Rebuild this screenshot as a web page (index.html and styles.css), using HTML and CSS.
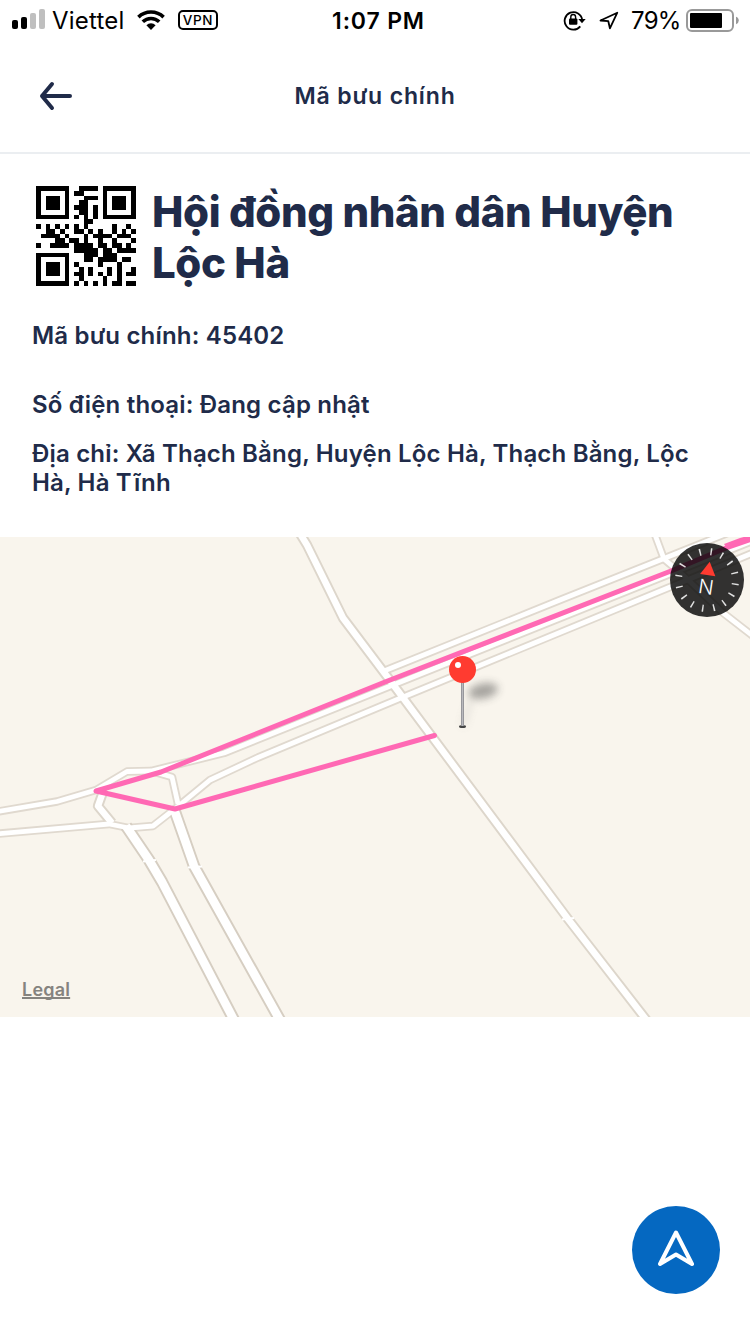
FILE: index.html
```html
<!DOCTYPE html>
<html lang="vi">
<head>
<meta charset="utf-8">
<title>Mã bưu chính</title>
<link rel="stylesheet" href="styles.css">
</head>
<body>
<div class="screen">
  <div class="status">
    <div class="status-side">
      <svg class="signal" width="34" height="22" viewBox="0 0 34 22"><rect x="0" y="12" width="6" height="9" rx="2"/><rect x="9" y="9" width="6" height="12" rx="2"/><g fill="#bfbfbf"><rect x="18" y="5" width="6" height="16" rx="2"/><rect x="27" y="1" width="6" height="20" rx="2"/></g></svg>
      <span class="carrier">Viettel</span>
      <svg class="wifi" width="28" height="20" viewBox="0 0 28 20"><g fill="none" stroke="#000" stroke-width="3.6"><path d="M1.4 7.1a18.3 18.3 0 0 1 25.2 0"/><path d="M5.8 11.8a11.8 11.8 0 0 1 16.4 0"/></g><path d="M9.4 15.2a6.7 6.7 0 0 1 9.2 0L14 20z"/></svg>
      <span class="vpn">VPN</span>
    </div>
    <span class="clock">1:07 PM</span>
    <div class="status-side status-right">
      <svg class="lock" width="24" height="22" viewBox="0 0 24 22"><path d="M17.300 17.400a8.800 8.800 0 1 1 1.900-6.400" fill="none" stroke="#000" stroke-width="1.8"/><path d="M15.300 10h7.400L19 14.300z"/><rect x="6" y="9.500" width="8.400" height="6.200" rx="1"/><path d="M7.800 10V7.900a2.400 2.400 0 0 1 4.800 0V10" fill="none" stroke="#000" stroke-width="1.4"/></svg>
      <svg class="locate" width="20" height="20" viewBox="0 0 20 20"><path d="M18.300 2.700 1.500 10.500 9.300 11.200 10.900 18.300z" fill="none" stroke="#000" stroke-width="1.8" stroke-linejoin="round"/></svg>
      <span class="percent">79%</span>
      <svg class="battery" width="54" height="24" viewBox="0 0 54 24"><rect x="1" y="1" width="46" height="21" rx="5" fill="#fff" stroke="#999" stroke-width="2"/><rect x="4" y="4" width="32" height="15" rx="1"/><path d="M50 7.700a4 4 0 0 1 0 7.600z" fill="#999"/></svg>
    </div>
  </div>
  <header class="nav">
    <svg class="back" width="34" height="30" viewBox="0 0 34 30"><path d="M13 3 3 15 13 27M3 15H31" fill="none" stroke="#202b49" stroke-width="4" stroke-linecap="round" stroke-linejoin="round"/></svg>
    <span class="nav-title">Mã bưu chính</span>
  </header>
  <main class="info">
    <div class="heading">
      <svg class="qr" id="qr" width="100" height="100" viewBox="0 0 21 21" shape-rendering="crispEdges"></svg>
      <h1 class="name">Hội đồng nhân dân Huyện<br>Lộc Hà</h1>
    </div>
    <p class="line code">Mã bưu chính: 45402</p>
    <p class="line phone">Số điện thoại: Đang cập nhật</p>
    <p class="line address">Địa chỉ: Xã Thạch Bằng, Huyện Lộc Hà, Thạch Bằng, Lộc<br>Hà, Hà Tĩnh</p>
  </main>
  <section class="map">
    <svg class="map-art" width="750" height="480" viewBox="0 537 750 480">
      <defs>
        <filter id="soft" x="-50%" y="-50%" width="200%" height="200%"><feGaussianBlur stdDeviation="4"/></filter>
        <linearGradient id="stem"><stop offset="0" stop-color="#85858a"/><stop offset=".5" stop-color="#b9b9bd"/><stop offset="1" stop-color="#85858a"/></linearGradient>
        <g id="minor" fill="none" stroke-linejoin="round">
          <path d="M-5 812 57 801.500 96 790 127 771.500 151 771 224 753 388 687 760 538"/>
          <path d="M-5 834 109 824 129 828 153 826 176 808 210 780 258 757.500 402 697.500 760 550"/>
          <path d="M384 671 560 600 664 558.500 760 520"/>
          <path d="M151 771 172 777 178 804"/>
          <path d="M654 532 664 559 683 575 722 612 758 640"/>
        </g>
        <g id="major" fill="none" stroke-linejoin="round">
          <path d="M299 532 307 545 343 618 395 687 568 919 648 1022"/>
          <path d="M103 792 98 806 112 823"/>
        </g>
        <g id="trunk" fill="none" stroke-linejoin="round">
          <path d="M126 826 149 860 162 882 235 1022"/>
          <path d="M174 809 194 866 281 1022"/>
        </g>
      </defs>
      <use href="#minor" stroke="#e0d9cf" stroke-width="8.400"/>
      <use href="#major" stroke="#ddd6cb" stroke-width="10.400"/>
      <use href="#trunk" stroke="#d6cec2" stroke-width="12.400"/>
      <use href="#minor" stroke="#fff" stroke-width="4.800"/>
      <use href="#major" stroke="#fff" stroke-width="6.500"/>
      <use href="#trunk" stroke="#fff" stroke-width="8.500"/>
      <path d="M143 861.500 156 860M188 867.500 202 866.500M562 919.500 574 918" stroke="#fff" stroke-width="2"/>
      <path d="M434.500 735.500 175 809 96 791 161 772 385 682 671 571 726 548 755 538" fill="none" stroke="#ff69b4" stroke-width="5" stroke-linecap="round" stroke-linejoin="round"/>
      <path d="M724 544 740 538 755 534V540L742 544 726 547Z" fill="#ff69b4"/>
      <g filter="url(#soft)" opacity=".42"><ellipse cx="483" cy="691" rx="15" ry="7.500" transform="rotate(-12 483 691)" fill="#333"/><path d="M463 726 471 699" stroke="#777" stroke-width="2"/></g>
      <ellipse cx="462.500" cy="726.500" rx="3.500" ry="1.500" fill="#444"/>
      <rect x="461" y="680" width="3" height="46" fill="url(#stem)"/>
      <circle cx="462.500" cy="669.500" r="13.500" fill="#ff3b30"/>
      <circle cx="458" cy="665" r="3" fill="#fff"/>
      <g transform="translate(707 580)">
        <circle r="37" fill="#000" fill-opacity=".8"/>
        <g transform="rotate(8.500)">
          <circle class="dial" r="28.500" pathLength="360"/>
          <path d="M0-18.500 7.700-5H-7.700Z" fill="#ff3b30"/>
          <text class="north" x="0" y="14" text-anchor="middle">N</text>
        </g>
      </g>
    </svg>
    <span class="legal">Legal</span>
  </section>
  <button class="go" aria-label="Chỉ đường"><svg width="40" height="40" viewBox="0 0 40 40"><path d="M20 2.500 36 34 20 24.500 4 34Z" fill="none" stroke="#fff" stroke-width="4" stroke-linejoin="round"/></svg></button>
</div>
<script src="app.js"></script>
</body>
</html>
```
FILE: styles.css
```css
* { box-sizing: border-box; }
body { margin: 0; background: #fff; color: #202b49; font-family: Inter, "Noto Sans", sans-serif; }
.screen { position: relative; width: 750px; height: 1334px; overflow: hidden; display: flex; flex-direction: column; }
.status { height: 40px; flex: none; display: grid; grid-template-columns: 1fr auto 1fr; align-items: center; color: #000; font-size: 24px; line-height: 38px; }
.status-side { display: flex; align-items: center; }
.status-right { justify-content: flex-end; padding-right: 10px; }
.signal { margin-left: 12px; margin-top: -2px; }
.carrier { margin-left: 6px; width: 73px; padding-top: 2px; letter-spacing: .2px; white-space: nowrap; }
.wifi { margin-left: 12px; }
.vpn { margin-left: 13px; width: 40px; height: 20px; border: 2px solid #000; border-radius: 5px; font-size: 13.5px; font-weight: 500; line-height: 17px; letter-spacing: .7px; text-align: center; }
.clock { font-weight: 600; font-size: 23px; letter-spacing: .85px; padding: 2px 0 0 7px; }
.locate { margin-left: 12px; }
.percent { margin-left: 12px; width: 49px; padding-top: 2px; white-space: nowrap; font-size: 24px; letter-spacing: -.7px; }
.battery { margin-left: 6px; margin-top: 2px; }
.nav { height: 114px; flex: none; border-bottom: 2px solid #ebeef1; display: grid; grid-template-columns: 96px 1fr 96px; align-items: center; }
.back { margin-left: 39px; }
.nav-title { text-align: center; font-size: 23px; font-weight: 600; letter-spacing: .85px; }
.info { height: 383px; flex: none; padding: 32px 32px 0; }
.heading { display: flex; height: 102px; padding-left: 4px; }
.name { margin: 0 0 0 16px; font-size: 42px; line-height: 51px; font-weight: 800; letter-spacing: -.4px; white-space: nowrap; }
.line { margin: 0; font-size: 24px; line-height: 29px; font-weight: 600; letter-spacing: .18px; white-space: nowrap; }
.code { margin-top: 33px; }
.phone { margin-top: 40px; }
.address { margin-top: 20px; }
.map { position: relative; height: 480px; flex: none; background: #f9f5ed; }
.map-art { display: block; }
.dial { fill: none; stroke: #fff; stroke-opacity: .85; stroke-width: 7; stroke-dasharray: 3 19.5; stroke-dashoffset: 1.5; }
.north { font: 300 20px Inter, sans-serif; fill: #fff; }
.legal { position: absolute; left: 22px; bottom: 16px; font-size: 18px; line-height: 22px; font-weight: 600; letter-spacing: .2px; color: #85837f; text-decoration: underline 2px; text-underline-offset: 1px; text-decoration-skip-ink: none; }
.go { position: absolute; left: 632px; top: 1206px; width: 88px; height: 88px; padding: 0; border: 0; border-radius: 50%; background: #0568c1; display: flex; align-items: center; justify-content: center; }
```
FILE: app.js
```js
const rows = [
  "#######..####.#######",
  "#.....#.##....#.....#",
  "#.###.#...###.#.###.#",
  "#.###.#..##...#.###.#",
  "#.###.#.###.#.#.###.#",
  "#.....#..##.#.#.....#",
  "#######.#.#.#.#######",
  "..........##.........",
  "#.#.#.#.#.#.....#..#.",
  "..##.#..##.#.#..#.#.#",
  ".####.#...#.####.###.",
  "....##.##.#..#..#...#",
  "#..####.####.##.##.#.",
  "........#####.##.####",
  "#######...###.###....",
  "#.....#...##.####.##.",
  "#.###.#.#....#...#...",
  "#.###.#..#.#...#.#..#",
  "#.###.#.##.#.#.#.#.##",
  "#.....#..#....#..#...",
  "#######.#.#.#.#.##.##"
];
const d = rows.map((r, y) => [...r].map((c, x) => c === "#" ? `M${x} ${y}h1v1h-1z` : "").join("")).join("");
document.getElementById("qr").innerHTML = `<path d="${d}"/>`;
```
